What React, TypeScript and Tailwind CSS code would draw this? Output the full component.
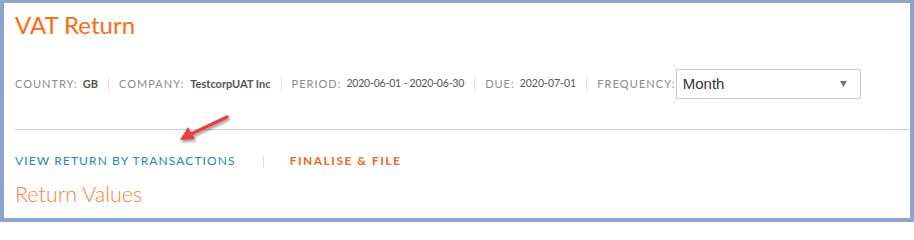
import React from "react";

const Sep = () => <span className="mx-[10px] inline-block h-[14px] w-px bg-[#e2e2e2]" />;

export default function App() {
  return (
    <div className="h-[222px] w-[914px] bg-[#8da4cc] pt-[3px] pl-[4px] pr-[4px] pb-[4px]">
      <div className="relative flex h-full flex-col bg-white">
        <div className="ml-[11px] mt-[2px] h-[40px] font-['Lato',sans-serif] text-[24px] leading-[40px] text-[#ff6a13]">
          VAT Return
        </div>
        <div className="ml-[11px] mt-[24px] flex h-[30px] items-center font-['Lato',sans-serif] text-[11px] text-[#8c8c8c]">
          <span className="tracking-[1px]">COUNTRY:</span>
          <span className="ml-[5px] font-bold text-[#555]">GB</span>
          <Sep />
          <span className="tracking-[1px]">COMPANY:</span>
          <span className="ml-[6px] font-bold text-[#555]">TestcorpUAT Inc</span>
          <Sep />
          <span className="tracking-[1px]">PERIOD:</span>
          <span className="ml-[5px] text-[10.5px] tracking-[-0.2px] text-[#555]">2020-06-01 - 2020-06-30</span>
          <Sep />
          <span className="tracking-[1px]">DUE:</span>
          <span className="ml-[5px] text-[10.5px] text-[#555]">2020-07-01</span>
          <Sep />
          <span className="tracking-[1.1px]">FREQUENCY:</span>
          <div className="flex h-[30px] w-[185px] items-center justify-between border border-[#ccc] bg-white pl-[6px] pr-[13px] font-['Liberation_Sans',Arial,sans-serif] text-[15px] text-[#333]">
            <span>Month</span>
            <svg width="7" height="6" viewBox="0 0 7 6">
              <path d="M0 0 H7 L3.5 6 Z" fill="#777" />
            </svg>
          </div>
        </div>
        <div className="ml-[11px] mt-[30px] border-t border-[#cfcfcf]" />
        <div className="ml-[11px] mt-[21px] flex h-[20px] items-center font-['Lato',sans-serif] text-[12px]">
          <span className="tracking-[1.1px] text-[#1e88b4]">VIEW RETURN BY TRANSACTIONS</span>
          <span className="ml-[27px] mr-[26px] inline-block h-[13px] w-px bg-[#ddd]" />
          <span className="font-bold tracking-[1.5px] text-[#f26522]">FINALISE &amp; FILE</span>
        </div>
        <div className="ml-[11px] mt-[9px] h-[28px] font-['Lato',sans-serif] text-[21.5px] font-light leading-[28px] text-[#ff7d3b]">
          Return Values
        </div>
        <svg
          className="absolute left-[166px] top-[106px]"
          width="70"
          height="40"
          viewBox="0 0 70 40"
        >
          <defs>
            <filter id="sh" x="-30%" y="-30%" width="160%" height="160%">
              <feGaussianBlur in="SourceAlpha" stdDeviation="1.5" />
              <feOffset dx="1" dy="2" result="b" />
              <feComponentTransfer>
                <feFuncA type="linear" slope="0.45" />
              </feComponentTransfer>
              <feMerge>
                <feMergeNode />
                <feMergeNode in="SourceGraphic" />
              </feMerge>
            </filter>
          </defs>
          <g filter="url(#sh)">
            <line x1="57" y1="8" x2="21" y2="25" stroke="#e8403f" strokeWidth="3.4" strokeLinecap="round" />
            <path d="M10 31 L18 18 L25 30 Z" fill="#e8403f" />
          </g>
        </svg>
      </div>
    </div>
  );
}
